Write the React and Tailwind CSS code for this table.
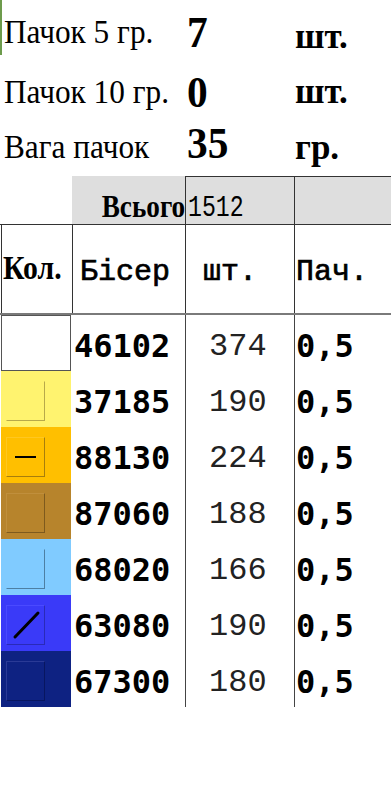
import React from 'react';

const serif = "font-['Liberation_Serif',serif]";
const monoBold = "font-['DejaVu_Sans_Mono',monospace] font-bold";
const mono = "font-['Liberation_Mono',monospace]";

const beads = [
  { code: '46102', count: 374, packs: '0,5', swatch: 'bg-white border border-[#555]', inner: '', mark: null },
  { code: '37185', count: 190, packs: '0,5', swatch: 'bg-[#fff36f]', inner: 'border-r-[#b8a94a] border-b-[#b8a94a] border-t-[#fff36f] border-l-[#fff36f]', mark: null },
  { code: '88130', count: 224, packs: '0,5', swatch: 'bg-[#ffbf00]', inner: 'border-r-[#a77e0d] border-b-[#a77e0d] border-t-[#ffc720] border-l-[#ffc720]', mark: 'dash' },
  { code: '87060', count: 188, packs: '0,5', swatch: 'bg-[#b7842c]', inner: 'border-r-[#7e5a1d] border-b-[#7e5a1d] border-t-[#c08f3c] border-l-[#c08f3c]', mark: null },
  { code: '68020', count: 166, packs: '0,5', swatch: 'bg-[#80cbff]', inner: 'border-r-[#4d7fa3] border-b-[#4d7fa3] border-t-[#80cbff] border-l-[#80cbff]', mark: null },
  { code: '63080', count: 190, packs: '0,5', swatch: 'bg-[#3a3af8]', inner: 'border-r-[#2a2ab8] border-b-[#2a2ab8] border-t-[#4a4aff] border-l-[#4a4aff]', mark: 'slash' },
  { code: '67300', count: 180, packs: '0,5', swatch: 'bg-[#0e2282]', inner: 'border-r-[#081660] border-b-[#081660] border-t-[#2a3a96] border-l-[#2a3a96]', mark: null },
];

const Summary = ({ label, value, unit, h, lp, up, edge }) => (
  <div className={`flex items-end ${h} ${edge ? 'border-l-2 border-[#6d9b4c] pl-[2px]' : 'pl-[4px]'}`}>
    <div className={`w-[183px] text-[34px] leading-none text-black whitespace-nowrap scale-x-[0.92] origin-left ${serif} ${lp}`}>{label}</div>
    <div className={`w-[108px] text-[45px] leading-none font-bold text-black scale-x-[0.92] origin-left ${serif}`}>{value}</div>
    <div className={`text-[35px] leading-none font-bold text-black ${serif} ${up}`}>{unit}</div>
  </div>
);

const Swatch = ({ bead }) => (
  <div className={`h-full w-[70px] ml-px ${bead.swatch}`}>
    {bead.inner && (
      <div className={`ml-[5px] mt-[10px] w-[39px] h-[40px] border flex items-center justify-center ${bead.inner}`}>
        {bead.mark === 'dash' && <div className="w-[21px] h-[2px] bg-black" />}
        {bead.mark === 'slash' && (
          <svg width="30" height="30" viewBox="0 0 30 30">
            <line x1="4" y1="27" x2="27" y2="3" stroke="#000" strokeWidth="3" strokeLinecap="round" />
          </svg>
        )}
      </div>
    )}
  </div>
);

export default function App() {
  return (
    <div className="w-[391px] h-[800px] bg-white overflow-hidden">
      <Summary label="Пачок 5 гр." value="7" unit="шт." h="h-[55px]" lp="pb-[6px]" up="pb-[1px]" edge />
      <Summary label="Пачок 10 гр." value="0" unit="шт." h="h-[60px]" lp="pb-[6px]" up="pb-[6px]" />
      <Summary label="Вага пачок" value="35" unit="гр." h="h-[51px]" lp="pb-[2px]" up="pb-[1px]" />

      <div className="mt-[10px] grid grid-cols-[72px_113px_109px_1fr] h-[48px]">
        <div />
        <div className="bg-[#dedede] flex justify-end">
          <div className={`pt-[14px] text-[32px] leading-none font-bold text-black scale-x-[0.85] origin-right ${serif}`}>Всього</div>
        </div>
        <div className="bg-[#dedede] border-t border-l border-[#333] pl-[2px]">
          <div className={`pt-[17px] text-[29px] leading-none text-black scale-x-[0.8] origin-left ${mono}`}>1512</div>
        </div>
        <div className="bg-[#dedede] border-t border-l border-[#333]" />
      </div>

      <div className="grid grid-cols-[72px_113px_109px_1fr] h-[91px] border-t border-b-2 border-t-[#333] border-b-[#7a7a7a]">
        <div className="border-l border-[#333] ml-px pl-[1px]">
          <div className={`pt-[27px] text-[33px] leading-none font-bold text-black scale-x-[0.9] origin-left ${serif}`}>Кол.</div>
        </div>
        <div className={`border-l border-[#333] pl-[7px] pt-[32px] text-[30px] leading-none text-black [-webkit-text-stroke:0.7px_#000] ${mono}`}>Бісер</div>
        <div className={`border-l border-[#333] pl-[17px] pt-[32px] text-[30px] leading-none text-black [-webkit-text-stroke:0.7px_#000] ${mono}`}>шт.</div>
        <div className={`border-l border-[#333] pl-[1px] pt-[32px] text-[30px] leading-none text-black [-webkit-text-stroke:0.7px_#000] ${mono}`}>Пач.</div>
      </div>

      {beads.map(bead => (
        <div key={bead.code} className="grid grid-cols-[72px_113px_109px_1fr] h-[56px]">
          <Swatch bead={bead} />
          <div className={`pl-[2px] pt-[15px] text-[32px] leading-none text-black ${monoBold}`}>{bead.code}</div>
          <div className={`border-l border-[#444] pl-[23px] pt-[16px] text-[32px] leading-none text-[#222] ${mono}`}>{bead.count}</div>
          <div className={`border-l border-[#444] pl-px pt-[15px] text-[32px] leading-none text-black ${monoBold}`}>{bead.packs}</div>
        </div>
      ))}
    </div>
  );
}
